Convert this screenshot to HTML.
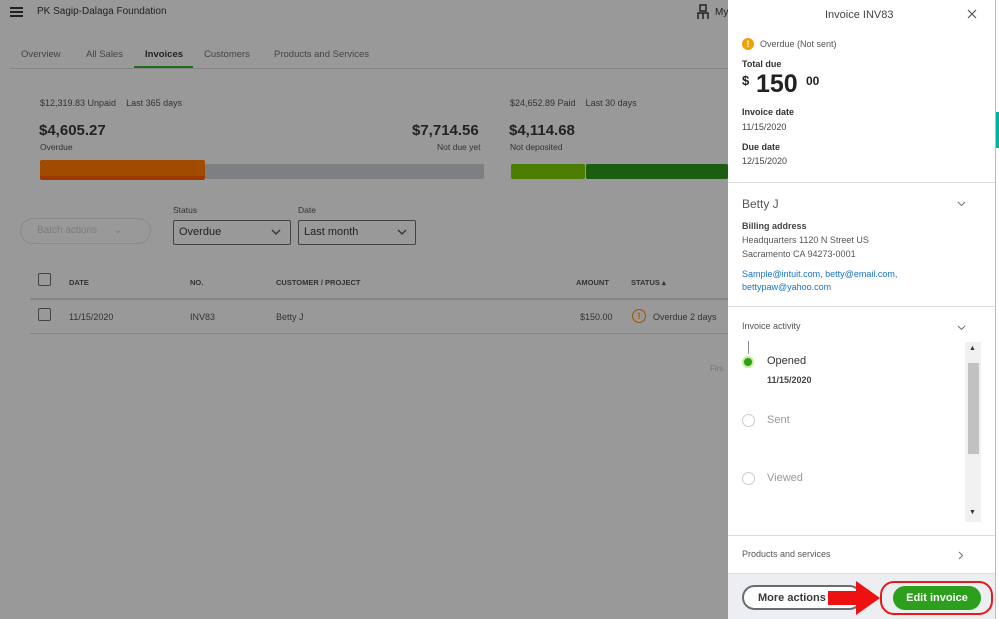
<!DOCTYPE html>
<html><head><style>
*{margin:0;padding:0;box-sizing:border-box}
body{width:999px;height:619px;overflow:hidden;background:#999;font-family:"Liberation Sans",sans-serif;position:relative;color:#222}
.a{position:absolute;white-space:nowrap}
.g{color:#333}
</style></head><body>
<!-- background app (dimmed) -->
<div class="a" style="left:10px;top:7px;width:13px;height:2px;background:#222;box-shadow:0 4px 0 #222,0 8px 0 #222"></div>
<div class="a" style="left:37px;top:6px;font-size:10px;color:#222">PK Sagip-Dalaga Foundation</div>
<svg class="a" style="left:697px;top:4px" width="12" height="16" viewBox="0 0 12 16"><path d="M3 1h6v6H3zM1 15V9h10v6M6 9v6" fill="none" stroke="#222" stroke-width="1.5"/></svg>
<div class="a" style="left:715px;top:7px;font-size:10px;color:#222">My</div>
<div class="a" style="left:21px;top:49px;font-size:9.5px;color:#444">Overview</div>
<div class="a" style="left:86px;top:49px;font-size:9.5px;color:#444">All Sales</div>
<div class="a" style="left:145px;top:49px;font-size:9.5px;color:#222;font-weight:bold">Invoices</div>
<div class="a" style="left:134px;top:66px;width:59px;height:3px;background:#1f6e1a"></div>
<div class="a" style="left:204px;top:49px;font-size:9.5px;color:#444">Customers</div>
<div class="a" style="left:274px;top:49px;font-size:9.5px;color:#444">Products and Services</div>
<div class="a" style="left:10px;top:68px;width:718px;height:1px;background:#858585"></div>

<div class="a" style="left:40px;top:98px;font-size:9px;color:#333">$12,319.83 Unpaid &nbsp;&nbsp; Last 365 days</div>
<div class="a" style="left:39px;top:122px;font-size:15px;font-weight:bold;color:#222">$4,605.27</div>
<div class="a" style="left:40px;top:142px;font-size:8.5px;color:#333">Overdue</div>
<div class="a" style="left:412px;top:122px;font-size:15px;font-weight:bold;color:#222">$7,714.56</div>
<div class="a" style="left:437px;top:142px;font-size:8.5px;color:#333">Not due yet</div>
<div class="a" style="left:40px;top:160px;width:165px;height:20px;background:#a04b00;border-radius:2px;border-bottom:4px solid #9a3a00"></div>
<div class="a" style="left:205px;top:164px;width:279px;height:15px;background:#7e7f83;border-radius:2px"></div>

<div class="a" style="left:510px;top:98px;font-size:9px;color:#333">$24,652.89 Paid &nbsp;&nbsp; Last 30 days</div>
<div class="a" style="left:509px;top:122px;font-size:15px;font-weight:bold;color:#222">$4,114.68</div>
<div class="a" style="left:510px;top:142px;font-size:8.5px;color:#333">Not deposited</div>
<div class="a" style="left:511px;top:164px;width:74px;height:15px;background:#4a7d00;border-radius:2px"></div>
<div class="a" style="left:586px;top:164px;width:142px;height:15px;background:#1c5d11;border-radius:2px"></div>

<div class="a" style="left:20px;top:218px;width:131px;height:26px;border:1px solid #8a8a8a;border-radius:13px;font-size:10px;color:#7c7c7c;padding:6px 0 0 16px">Batch actions <span style="margin-left:14px">⌄</span></div>
<div class="a" style="left:173px;top:205px;font-size:8.5px;color:#333">Status</div>
<div class="a" style="left:173px;top:220px;width:118px;height:25px;border:1px solid #444;border-radius:2px;font-size:11px;color:#222;padding:5px 0 0 5px">Overdue</div>
<svg class="a" style="left:271px;top:229px" width="10" height="7"><path d="M1 1l4 4 4-4" fill="none" stroke="#333" stroke-width="1.3"/></svg>
<div class="a" style="left:298px;top:205px;font-size:8.5px;color:#333">Date</div>
<div class="a" style="left:298px;top:220px;width:118px;height:25px;border:1px solid #444;border-radius:2px;font-size:11px;color:#222;padding:5px 0 0 5px">Last month</div>
<svg class="a" style="left:397px;top:229px" width="10" height="7"><path d="M1 1l4 4 4-4" fill="none" stroke="#333" stroke-width="1.3"/></svg>

<div class="a" style="left:38px;top:273px;width:13px;height:13px;border:1px solid #444;border-radius:2px"></div>
<div class="a" style="left:69px;top:278px;font-size:7.5px;font-weight:bold;color:#333">DATE</div>
<div class="a" style="left:190px;top:278px;font-size:7.5px;font-weight:bold;color:#333">NO.</div>
<div class="a" style="left:276px;top:278px;font-size:7.5px;font-weight:bold;color:#333">CUSTOMER / PROJECT</div>
<div class="a" style="left:576px;top:278px;font-size:7.5px;font-weight:bold;color:#333">AMOUNT</div>
<div class="a" style="left:631px;top:278px;font-size:7.5px;font-weight:bold;color:#333">STATUS ▴</div>
<div class="a" style="left:30px;top:298px;width:698px;height:2px;background:#858585"></div>
<div class="a" style="left:38px;top:308px;width:13px;height:13px;border:1px solid #444;border-radius:2px"></div>
<div class="a" style="left:69px;top:312px;font-size:9px;color:#333">11/15/2020</div>
<div class="a" style="left:190px;top:312px;font-size:9px;color:#333">INV83</div>
<div class="a" style="left:276px;top:312px;font-size:9px;color:#333">Betty J</div>
<div class="a" style="left:580px;top:312px;font-size:9px;color:#333">$150.00</div>
<div class="a" style="left:632px;top:309px;width:14px;height:14px;border:1.5px solid #a0520a;border-radius:50%;font-size:9px;color:#a0520a;text-align:center;line-height:12px;font-weight:bold">!</div>
<div class="a" style="left:653px;top:312px;font-size:9px;color:#333">Overdue 2 days</div>
<div class="a" style="left:30px;top:333px;width:698px;height:1px;background:#858585"></div>
<div class="a" style="left:710px;top:364px;font-size:8px;color:#777">Firs</div>

<!-- right strip -->
<div class="a" style="left:995px;top:0;width:4px;height:619px;background:#fff;border-left:1px solid #bbb"></div>
<div class="a" style="left:996px;top:112px;width:3px;height:36px;background:#00b4a0"></div>

<!-- panel -->
<div class="a" style="left:728px;top:0;width:267px;height:619px;background:#fff"></div>
<div class="a" style="left:825px;top:9px;font-size:11px;color:#444">Invoice INV83</div>
<svg class="a" style="left:967px;top:9px" width="10" height="10"><path d="M1 1l8 8M9 1l-8 8" stroke="#555" stroke-width="1.2"/></svg>
<div class="a" style="left:742px;top:38px;width:12px;height:12px;border-radius:50%;background:#f0a000;color:#fff;font-size:9px;font-weight:bold;text-align:center;line-height:12px">!</div>
<div class="a" style="left:760px;top:39px;font-size:9px;color:#555">Overdue (Not sent)</div>
<div class="a" style="left:742px;top:59px;font-size:9px;color:#333;font-weight:bold">Total due</div>
<div class="a" style="left:742px;top:73px;font-size:13px;font-weight:bold;color:#222">$</div>
<div class="a" style="left:756px;top:70px;font-size:25px;font-weight:bold;color:#222">150</div>
<div class="a" style="left:806px;top:74px;font-size:12px;font-weight:bold;color:#222">00</div>
<div class="a" style="left:742px;top:107px;font-size:9px;color:#333;font-weight:bold">Invoice date</div>
<div class="a" style="left:742px;top:122px;font-size:9px;color:#444">11/15/2020</div>
<div class="a" style="left:742px;top:142px;font-size:9px;color:#333;font-weight:bold">Due date</div>
<div class="a" style="left:742px;top:156px;font-size:9px;color:#444">12/15/2020</div>
<div class="a" style="left:728px;top:182px;width:267px;height:1px;background:#ddd"></div>
<div class="a" style="left:742px;top:197px;font-size:12px;color:#555">Betty J</div>
<svg class="a" style="left:957px;top:201px" width="9" height="6"><path d="M1 1l3.5 3.5L8 1" fill="none" stroke="#777" stroke-width="1.1"/></svg>
<div class="a" style="left:742px;top:221px;font-size:9px;color:#444;font-weight:bold">Billing address</div>
<div class="a" style="left:742px;top:235px;font-size:9px;color:#555">Headquarters 1120 N Street US</div>
<div class="a" style="left:742px;top:249px;font-size:9px;color:#555">Sacramento CA 94273-0001</div>
<div class="a" style="left:742px;top:269px;font-size:9px;color:#1a73c8">Sample@intuit.com, betty@email.com,</div>
<div class="a" style="left:742px;top:282px;font-size:9px;color:#1a73c8">bettypaw@yahoo.com</div>
<div class="a" style="left:728px;top:306px;width:267px;height:1px;background:#ddd"></div>
<div class="a" style="left:742px;top:321px;font-size:9px;color:#555">Invoice activity</div>
<svg class="a" style="left:957px;top:325px" width="9" height="6"><path d="M1 1l3.5 3.5L8 1" fill="none" stroke="#777" stroke-width="1.1"/></svg>
<div class="a" style="left:748px;top:341px;width:1px;height:13px;background:#8a90a0"></div>
<div class="a" style="left:742px;top:356px;width:12px;height:12px;border-radius:50%;background:#2ca01c;border:2px solid #c8ec9c"></div>
<div class="a" style="left:767px;top:355px;font-size:11px;color:#333">Opened</div>
<div class="a" style="left:767px;top:375px;font-size:9px;color:#444;font-weight:bold">11/15/2020</div>
<div class="a" style="left:742px;top:414px;width:13px;height:13px;border-radius:50%;border:1px solid #ccc"></div>
<div class="a" style="left:767px;top:414px;font-size:11px;color:#999">Sent</div>
<div class="a" style="left:742px;top:472px;width:13px;height:13px;border-radius:50%;border:1px solid #ccc"></div>
<div class="a" style="left:767px;top:472px;font-size:11px;color:#999">Viewed</div>
<div class="a" style="left:965px;top:342px;width:16px;height:180px;background:#f0f0f0"></div>
<div class="a" style="left:968px;top:363px;width:11px;height:91px;background:#c1c1c1"></div>
<div class="a" style="left:969px;top:345px;font-size:7px;color:#333">▲</div>
<div class="a" style="left:969px;top:509px;font-size:7px;color:#333">▼</div>
<div class="a" style="left:728px;top:535px;width:267px;height:1px;background:#ddd"></div>
<div class="a" style="left:742px;top:549px;font-size:9px;color:#555">Products and services</div>
<svg class="a" style="left:958px;top:551px" width="6" height="9"><path d="M1 1l3.5 3.5L1 8" fill="none" stroke="#777" stroke-width="1.1"/></svg>
<div class="a" style="left:728px;top:573px;width:267px;height:46px;background:#eceef1;border-top:1px solid #ddd"></div>
<div class="a" style="left:742px;top:585px;width:120px;height:25px;border:2px solid #6b6c72;border-radius:13px;background:#fff;font-size:11px;font-weight:bold;color:#393a3d;padding:5px 0 0 14px">More actions</div>
<svg class="a" style="left:826px;top:579px" width="56" height="40"><path d="M2 12h28V2l24 17-24 17V26H2z" fill="#ee1111"/></svg>
<div class="a" style="left:880px;top:581px;width:113px;height:34px;border:2px solid #e51a1a;border-radius:14px"></div>
<div class="a" style="left:893px;top:586px;width:88px;height:24px;border-radius:12px;background:#2ca01c;color:#fff;font-size:11px;font-weight:bold;text-align:center;line-height:24px">Edit invoice</div>
</body></html>
